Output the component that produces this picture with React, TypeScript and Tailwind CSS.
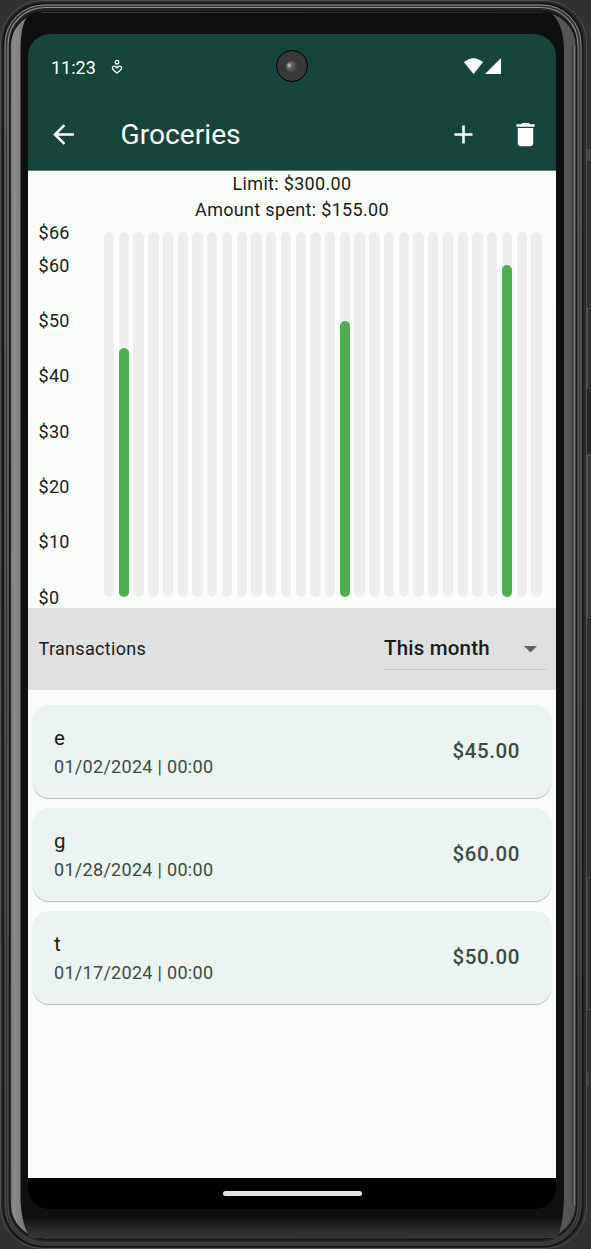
import React from "react";

const DAYS = 30;
const SPENT: Record<number, number> = { 2: 45, 17: 50, 28: 60 };
const MAX = 66;
const TICKS = [66, 60, 50, 40, 30, 20, 10, 0];
const TRANSACTIONS = [
  { name: "e", date: "01/02/2024 | 00:00", amount: "$45.00" },
  { name: "g", date: "01/28/2024 | 00:00", amount: "$60.00" },
  { name: "t", date: "01/17/2024 | 00:00", amount: "$50.00" },
];

function DeviceFrame() {
  return (
    <svg className="absolute inset-0" width="591" height="1249" viewBox="0 0 591 1249" fill="none">
      <defs>
        <linearGradient id="rail" x1="0" x2="1" y1="0" y2="0">
          <stop offset="0" stopColor="#6e6e6e" />
          <stop offset="0.007" stopColor="#8c8c8c" />
          <stop offset="0.02" stopColor="#7e7e7e" />
          <stop offset="0.5" stopColor="#6c6c6c" />
          <stop offset="0.98" stopColor="#565656" />
          <stop offset="1" stopColor="#505050" />
        </linearGradient>
        <linearGradient id="glass" x1="0" x2="0" y1="0" y2="1">
          <stop offset="0" stopColor="#0f0f0f" />
          <stop offset="0.983" stopColor="#101010" />
          <stop offset="1" stopColor="#3a3a3a" />
        </linearGradient>
        <linearGradient id="shine" x1="0" x2="0" y1="0" y2="1">
          <stop offset="0" stopColor="#8e8e8e" />
          <stop offset="0.5" stopColor="#6c6c6c" />
          <stop offset="1" stopColor="#454545" />
        </linearGradient>
      </defs>
      <rect x="584" y="149" width="7" height="12" fill="#454545" />
      <rect x="584" y="1072" width="5" height="14" fill="#454545" />
      <rect x="587.5" y="308.5" width="6" height="80" fill="#303030" stroke="#555555" />
      <rect x="586.5" y="388.5" width="6" height="66" fill="#252525" stroke="#444444" />
      <rect x="587.5" y="455.5" width="6" height="162" fill="#353535" stroke="#555555" />
      <rect x="587.5" y="877.5" width="6" height="132" fill="#303030" stroke="#484848" />
      <rect x="0.5" y="0.5" width="586" height="1248" rx="42" fill="#2c2c2c" stroke="#505050" />
      <rect x="3.5" y="3.5" width="579" height="1243" rx="40" fill="#343434" stroke="#161616" strokeWidth="2" />
      <rect x="5" y="5" width="576" height="1240" rx="39" stroke="url(#shine)" />
      <rect x="8" y="7.5" width="570" height="1235" rx="37" fill="#242424" stroke="url(#shine)" strokeWidth="1.2" />
      <rect x="10" y="11.5" width="566.5" height="1227.5" rx="35" fill="url(#rail)" stroke="#161616" strokeWidth="1.5" />
      <path d="M574.5 46V1205" stroke="#777777" strokeWidth="1.2" />
      <path d="M572.5 46V1205" stroke="#404040" />
      <path
        d="M36 12.5H550Q562 20 564 46V1200Q563 1226 557 1238H30Q22 1226 20.5 1200V46Q21 26 27 16.5Q31 12.5 36 12.5Z"
        fill="url(#glass)"
      />
    </svg>
  );
}

function StatusBar() {
  return (
    <div className="flex h-[64px] items-center pl-[23px] pr-[54px] text-white">
      <span className="pt-[3px] text-[18px] leading-none">11:23</span>
      <svg className="ml-[15.5px] mt-[2px]" width="12" height="16" viewBox="0 0 12 16" fill="none" stroke="currentColor" strokeWidth="1.3">
        <circle cx="6" cy="3.2" r="1.8" />
        <path d="M6 9 C4.8 6.2 1.4 6.6 1.4 9 C1.4 10.6 3 11.7 6 14 C9 11.7 10.6 10.6 10.6 9 C10.6 6.6 7.2 6.2 6 9 L4.2 7.6 M6 9 L7.8 7.6" />
      </svg>
      <span className="ml-[152.5px] grid h-8 w-8 place-items-center rounded-full border border-black bg-[#383838]">
        <span className="h-[11px] w-[11px] rounded-full bg-[radial-gradient(circle_at_30%_40%,#d8cfd2_0,#6b6468_25%,#45464f_60%,#3b3b3e_100%)]" />
      </span>
      <svg className="ml-auto" width="38" height="16" viewBox="0 0 38 16" fill="currentColor">
        <path d="M0 4.2 Q9.5 -3.8 19 4.2 L9.5 16 Z" />
        <path d="M21 16 L37 0 V16 Z" />
      </svg>
    </div>
  );
}

function AppBar() {
  return (
    <div className="flex h-[73px] items-center pl-[20px] pr-[15px] text-white">
      <svg width="31" height="31" viewBox="0 0 24 24" fill="currentColor">
        <path d="M20 11H7.83l5.59-5.59L12 4l-8 8 8 8 1.41-1.41L7.83 13H20v-2z" />
      </svg>
      <h1 className="ml-[41.5px] pt-px text-[28.2px] leading-none font-normal">Groceries</h1>
      <svg className="ml-auto" width="31" height="31" viewBox="0 0 24 24" fill="currentColor">
        <path d="M19 13h-6v6h-2v-6H5v-2h6V5h2v6h6v2z" />
      </svg>
      <svg className="ml-[31px]" width="31" height="31" viewBox="0 0 24 24" fill="currentColor">
        <path d="M6 19c0 1.1.9 2 2 2h8c1.1 0 2-.9 2-2V7H6v12zM19 4h-3.5l-1-1h-5l-1 1H5v2h14V4z" />
      </svg>
    </div>
  );
}

function Chart() {
  return (
    <div className="flex h-[385.5px] pl-[10.5px] pr-[14px] pt-[10px]">
      <div className="relative h-[365px] w-[65.5px] text-[18px] leading-[26px] tracking-[0.32px]">
        {TICKS.map((t) => (
          <span key={t} className="absolute left-0 mt-[0.7px] -translate-y-1/2" style={{ top: `${(1 - t / MAX) * 100}%` }}>
            ${t}
          </span>
        ))}
      </div>
      <div className="flex h-[365px] flex-1 justify-between">
        {Array.from({ length: DAYS }, (_, i) => (
          <div key={i} className="flex w-[10.3px] items-end rounded-full bg-[#eeeeee]">
            {SPENT[i + 1] && (
              <div className="w-full rounded-full bg-[#4caf50]" style={{ height: `${(SPENT[i + 1] / MAX) * 100}%` }} />
            )}
          </div>
        ))}
      </div>
    </div>
  );
}

function TransactionCard({ name, date, amount }: { name: string; date: string; amount: string }) {
  return (
    <li className="flex h-[93px] items-center justify-between rounded-[16px] bg-[#ebf4f0] pl-[21px] pr-[31px] shadow-[0_1px_1px_rgba(0,0,0,0.22),0_1px_2px_rgba(0,0,0,0.06)]">
      <div>
        <div className="text-[20.5px] leading-[31px] tracking-[0.64px] text-[#191c1b]">{name}</div>
        <div className="text-[18px] leading-[26px] tracking-[0.3px] text-[#404944]">{date}</div>
      </div>
      <div className="text-[20.5px] font-medium tracking-[0.6px] text-[#404944]">{amount}</div>
    </li>
  );
}

export default function App() {
  return (
    <div className="h-[1249px] w-[591px] overflow-hidden bg-[#303133] font-[Roboto,sans-serif]">
      <div className="relative h-full">
        <DeviceFrame />
        <main className="relative flex h-full flex-col pb-[40px] pl-[28px] pr-[35px] pt-[34px]">
          <div className="flex flex-1 flex-col overflow-hidden rounded-[22px] bg-black text-[#191c1b]">
            <header className="h-[137px] border-b border-[#5f8379] bg-[#18453b]">
              <StatusBar />
              <AppBar />
            </header>
            <div className="flex flex-1 flex-col bg-[#fbfdfa]">
              <div className="h-[51px] text-center text-[18px] leading-[26px] tracking-[0.32px]">
                <div>Limit: $300.00</div>
                <div>Amount spent: $155.00</div>
              </div>
              <Chart />
              <section className="flex h-[82px] items-center justify-between bg-[#e0e0e0] pl-[10.5px] pr-[10px]">
                <span className="text-[18px] tracking-[0.32px]">Transactions</span>
                <button className="flex h-[42px] w-[162px] items-center justify-between border-b border-[#c9c9c9] pr-[9px]">
                  <span className="text-[20.5px] font-medium tracking-[0.19px]">This month</span>
                  <svg className="mt-[2px]" width="13" height="7" viewBox="0 0 13 7" fill="#616161">
                    <path d="M0 0H13L6.5 6.5Z" />
                  </svg>
                </button>
              </section>
              <ul className="flex flex-1 flex-col gap-[10px] px-[5px] pt-[15.5px]">
                {TRANSACTIONS.map((t) => (
                  <TransactionCard key={t.name} {...t} />
                ))}
              </ul>
            </div>
            <div className="flex h-[31px] justify-center bg-black pt-[13px]">
              <span className="h-[5px] w-[139px] rounded-full bg-[#e4e4e4]" />
            </div>
          </div>
        </main>
      </div>
    </div>
  );
}
